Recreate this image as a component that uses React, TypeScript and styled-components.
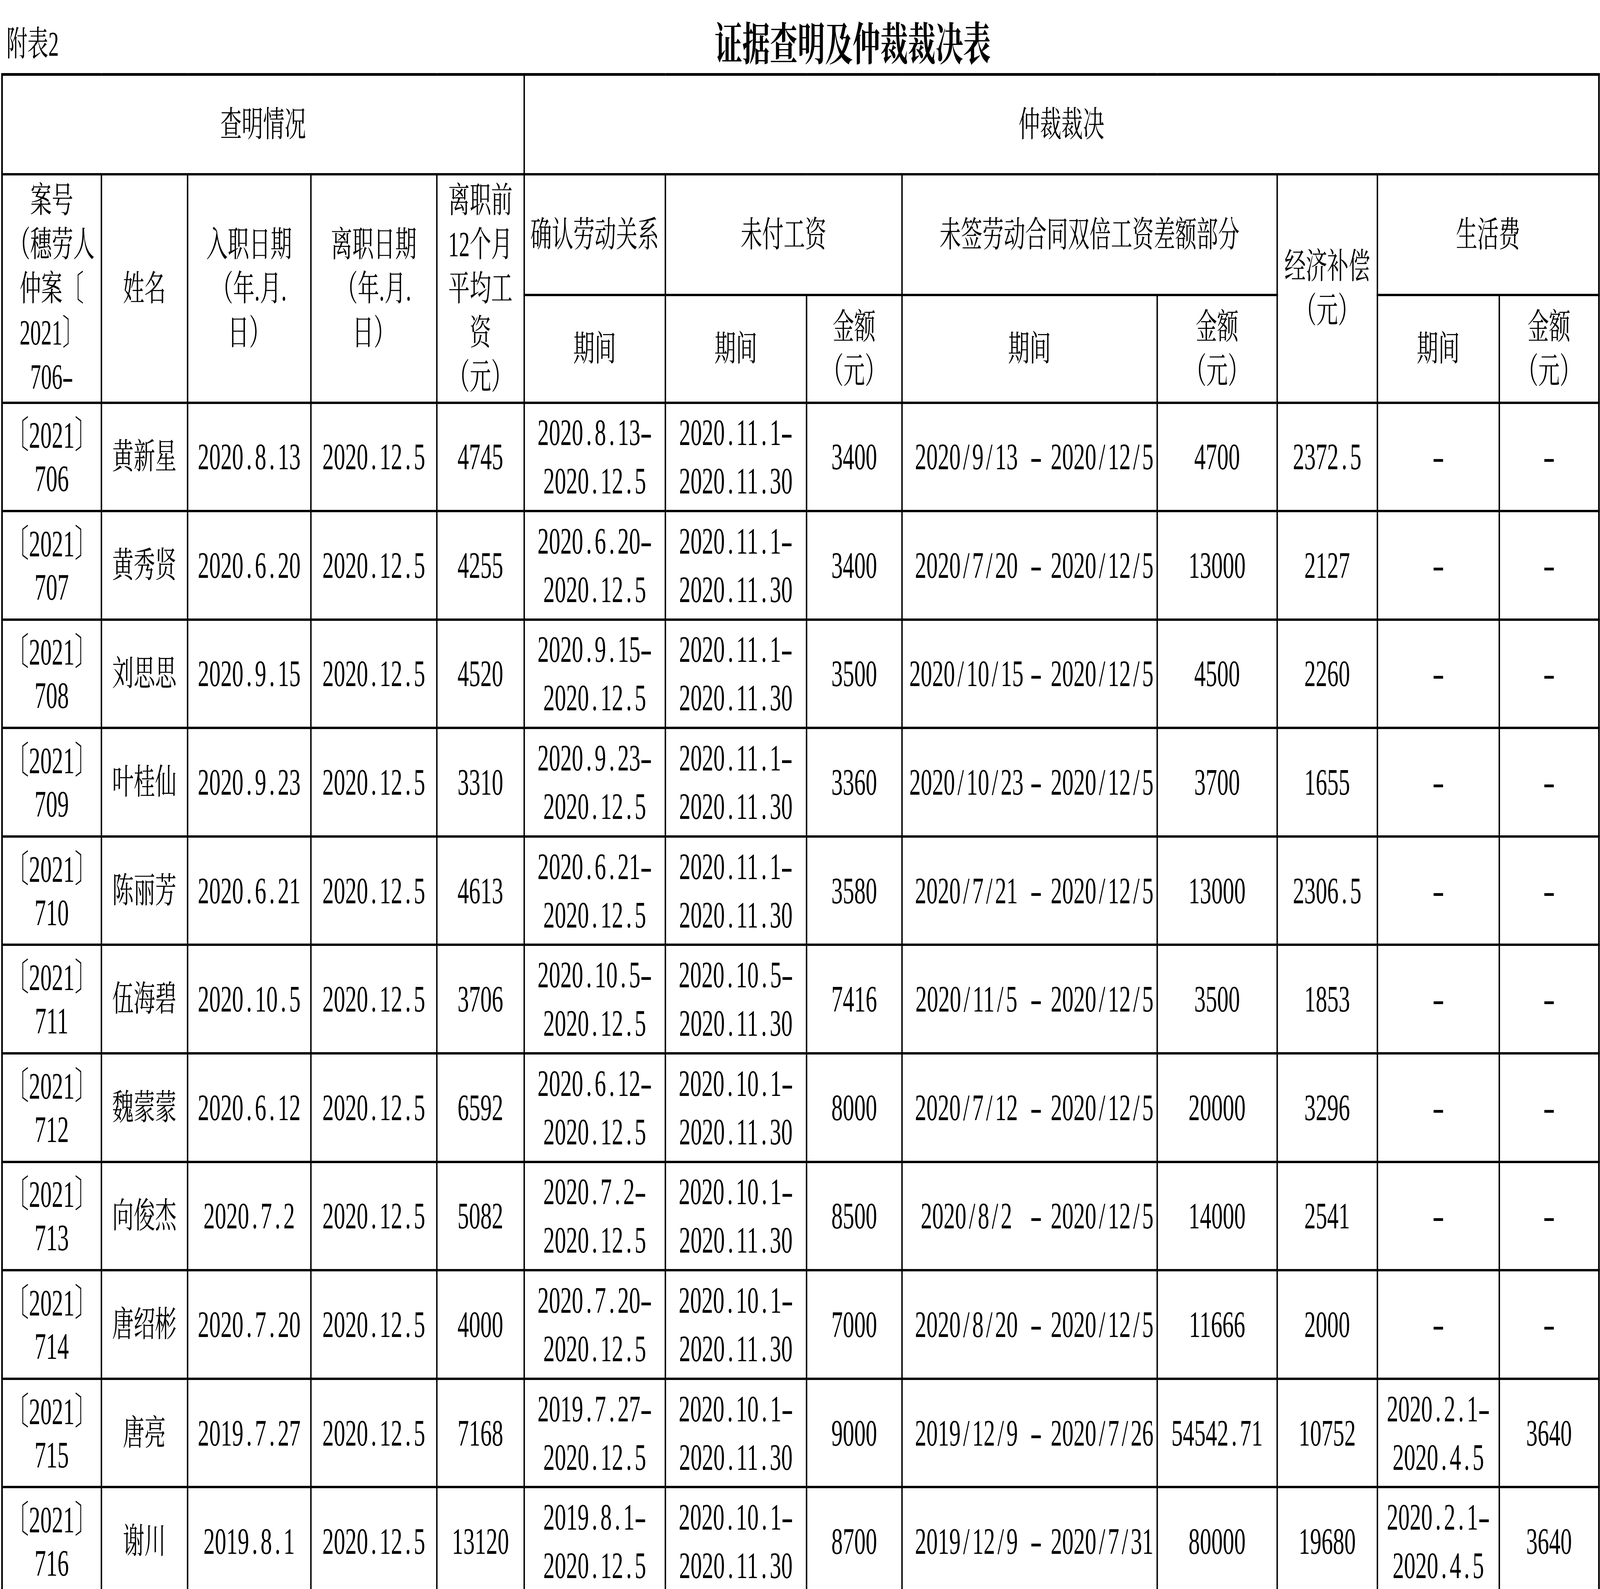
import React, { useEffect, useState } from 'react';
import styled, { createGlobalStyle } from 'styled-components';

const SERIF = `"Liberation Serif", "Noto Serif CJK SC", "Noto Sans CJK SC", serif`;
const FRAME_W = 6721;
const FRAME_H = 4067;

const GlobalStyle = createGlobalStyle`
  html, body {
    margin: 0;
    padding: 0;
    overflow: hidden;
    background: #fff;
  }
  body {
    color: #000;
    font-family: ${SERIF};
  }
`;

interface CaseRow {
  no: string;
  name: string;
  start: string;
  end: string;
  avg: string;
  relation: [string, string];
  unpaid: [string, string];
  unpaidAmount: string;
  doubleFrom: string;
  doubleTo: string;
  doubleAmount: string;
  compensation: string;
  living?: [string, string];
  livingAmount?: string;
}

const rows: CaseRow[] = [
  { no: '706', name: '黄新星', start: '2020.8.13', end: '2020.12.5', avg: '4745', relation: ['2020.8.13-', '2020.12.5'], unpaid: ['2020.11.1-', '2020.11.30'], unpaidAmount: '3400', doubleFrom: '2020/9/13', doubleTo: '2020/12/5', doubleAmount: '4700', compensation: '2372.5' },
  { no: '707', name: '黄秀贤', start: '2020.6.20', end: '2020.12.5', avg: '4255', relation: ['2020.6.20-', '2020.12.5'], unpaid: ['2020.11.1-', '2020.11.30'], unpaidAmount: '3400', doubleFrom: '2020/7/20', doubleTo: '2020/12/5', doubleAmount: '13000', compensation: '2127' },
  { no: '708', name: '刘思思', start: '2020.9.15', end: '2020.12.5', avg: '4520', relation: ['2020.9.15-', '2020.12.5'], unpaid: ['2020.11.1-', '2020.11.30'], unpaidAmount: '3500', doubleFrom: '2020/10/15', doubleTo: '2020/12/5', doubleAmount: '4500', compensation: '2260' },
  { no: '709', name: '叶桂仙', start: '2020.9.23', end: '2020.12.5', avg: '3310', relation: ['2020.9.23-', '2020.12.5'], unpaid: ['2020.11.1-', '2020.11.30'], unpaidAmount: '3360', doubleFrom: '2020/10/23', doubleTo: '2020/12/5', doubleAmount: '3700', compensation: '1655' },
  { no: '710', name: '陈丽芳', start: '2020.6.21', end: '2020.12.5', avg: '4613', relation: ['2020.6.21-', '2020.12.5'], unpaid: ['2020.11.1-', '2020.11.30'], unpaidAmount: '3580', doubleFrom: '2020/7/21', doubleTo: '2020/12/5', doubleAmount: '13000', compensation: '2306.5' },
  { no: '711', name: '伍海碧', start: '2020.10.5', end: '2020.12.5', avg: '3706', relation: ['2020.10.5-', '2020.12.5'], unpaid: ['2020.10.5-', '2020.11.30'], unpaidAmount: '7416', doubleFrom: '2020/11/5', doubleTo: '2020/12/5', doubleAmount: '3500', compensation: '1853' },
  { no: '712', name: '魏蒙蒙', start: '2020.6.12', end: '2020.12.5', avg: '6592', relation: ['2020.6.12-', '2020.12.5'], unpaid: ['2020.10.1-', '2020.11.30'], unpaidAmount: '8000', doubleFrom: '2020/7/12', doubleTo: '2020/12/5', doubleAmount: '20000', compensation: '3296' },
  { no: '713', name: '向俊杰', start: '2020.7.2', end: '2020.12.5', avg: '5082', relation: ['2020.7.2-', '2020.12.5'], unpaid: ['2020.10.1-', '2020.11.30'], unpaidAmount: '8500', doubleFrom: '2020/8/2', doubleTo: '2020/12/5', doubleAmount: '14000', compensation: '2541' },
  { no: '714', name: '唐绍彬', start: '2020.7.20', end: '2020.12.5', avg: '4000', relation: ['2020.7.20-', '2020.12.5'], unpaid: ['2020.10.1-', '2020.11.30'], unpaidAmount: '7000', doubleFrom: '2020/8/20', doubleTo: '2020/12/5', doubleAmount: '11666', compensation: '2000' },
  { no: '715', name: '唐亮', start: '2019.7.27', end: '2020.12.5', avg: '7168', relation: ['2019.7.27-', '2020.12.5'], unpaid: ['2020.10.1-', '2020.11.30'], unpaidAmount: '9000', doubleFrom: '2019/12/9', doubleTo: '2020/7/26', doubleAmount: '54542.71', compensation: '10752', living: ['2020.2.1-', '2020.4.5'], livingAmount: '3640' },
  { no: '716', name: '谢川', start: '2019.8.1', end: '2020.12.5', avg: '13120', relation: ['2019.8.1-', '2020.12.5'], unpaid: ['2020.10.1-', '2020.11.30'], unpaidAmount: '8700', doubleFrom: '2019/12/9', doubleTo: '2020/7/31', doubleAmount: '80000', compensation: '19680', living: ['2020.2.1-', '2020.4.5'], livingAmount: '3640' },
];

const columnWidths = [417, 362, 518, 529, 367, 593, 593, 401, 1072, 504, 421, 512, 419];

// the sheet is drawn at the reference's pixel size and fitted to whatever window we get
const useFit = () => {
  const measure = () => {
    const sx = window.innerWidth / FRAME_W;
    const sy = window.innerHeight > 0 ? window.innerHeight / FRAME_H : sx;
    return { sx, sy };
  };
  const [fit, setFit] = useState(measure);
  useEffect(() => {
    const onResize = () => setFit(measure());
    window.addEventListener('resize', onResize);
    return () => window.removeEventListener('resize', onResize);
  }, []);
  return fit;
};

const Viewport = styled.div`
  width: 100vw;
  height: 100vh;
  overflow: hidden;
`;

const Page = styled.div`
  width: ${FRAME_W}px;
  height: ${FRAME_H}px;
  transform-origin: 0 0;
  display: flex;
  flex-direction: column;
`;

const TitleBar = styled.div`
  height: 187px;
  box-sizing: border-box;
  padding: 20px 0 0 27px;
  display: flex;
  align-items: center;
  flex-shrink: 0;
`;

const Label = styled.div`
  width: 225px;
  font-size: 88px;
  white-space: nowrap;
`;

const Title = styled.h1`
  margin: 0 0 0 2750px;
  font-size: 116px;
  font-weight: 700;
  white-space: nowrap;
`;

const Sheet = styled.table`
  margin-left: 5px;
  width: 6712px;
  table-layout: fixed;
  border-collapse: collapse;
  border: 7px solid #000;
`;

const Row = styled.tr<{ $h: number }>`
  height: ${p => p.$h}px;
`;

const HeadCell = styled.th`
  border: 6px solid #000;
  padding: 0;
  font-weight: 400;
  font-size: 90px;
  line-height: 113px;
  text-align: center;
  vertical-align: middle;
  white-space: nowrap;
`;

const Cell = styled.td<{ $size?: number; $lh?: number }>`
  border: 6px solid #000;
  padding: 0;
  font-size: ${p => p.$size ?? 96}px;
  line-height: ${p => p.$lh ?? 120}px;
  text-align: center;
  vertical-align: middle;
  white-space: nowrap;
`;

const Glyph = styled.span<{ $wide?: boolean }>`
  display: inline-block;
  width: 0.5em;
  text-align: center;
  transform: ${p => (p.$wide ? 'scaleX(1.6)' : 'none')};
`;

const Split = styled.div`
  display: grid;
  grid-template-columns: 536px 1fr;
  align-items: center;
`;

const From = styled.span`
  text-align: center;
`;

const To = styled.span`
  display: flex;
  justify-content: flex-end;
  align-items: center;
  gap: 38px;
  padding-right: 30px;
`;

const Num = ({ text }: { text: string }) => (
  <>
    {text.split(/([./-])/).map((part, i) => {
      if (part === '-') return <Glyph key={i} $wide>-</Glyph>;
      if (part === '.' || part === '/') return <Glyph key={i}>{part}</Glyph>;
      return part;
    })}
  </>
);

const Lines = ({ lines }: { lines: string[] }) => (
  <>
    {lines.map((line, i) => (
      <React.Fragment key={i}>
        {i > 0 && <br />}
        {line}
      </React.Fragment>
    ))}
  </>
);

const NumLines = ({ lines }: { lines: string[] }) => (
  <>
    {lines.map((line, i) => (
      <React.Fragment key={i}>
        {i > 0 && <br />}
        <Num text={line} />
      </React.Fragment>
    ))}
  </>
);

const App = () => {
  const { sx, sy } = useFit();

  return (
    <Viewport>
      <GlobalStyle />
      <Page style={{ transform: `scale(${sx}, ${sy})` }}>
        <TitleBar>
          <Label>附表2</Label>
          <Title>证据查明及仲裁裁决表</Title>
        </TitleBar>
        <Sheet>
          <colgroup>
            {columnWidths.map((w, i) => (
              <col key={i} style={{ width: w }} />
            ))}
          </colgroup>
          <thead>
            <Row $h={255}>
              <HeadCell colSpan={5}>查明情况</HeadCell>
              <HeadCell colSpan={8}>仲裁裁决</HeadCell>
            </Row>
            <Row $h={309}>
              <HeadCell rowSpan={2}>
                案号<br />（穗劳人<br />仲案〔<br />2021〕<br />706<Glyph $wide>-</Glyph>
              </HeadCell>
              <HeadCell rowSpan={2}>姓名</HeadCell>
              <HeadCell rowSpan={2}><Lines lines={['入职日期', '（年.月.', '日）']} /></HeadCell>
              <HeadCell rowSpan={2}><Lines lines={['离职日期', '（年.月.', '日）']} /></HeadCell>
              <HeadCell rowSpan={2}><Lines lines={['离职前', '12个月', '平均工', '资', '（元）']} /></HeadCell>
              <HeadCell>确认劳动关系</HeadCell>
              <HeadCell colSpan={2}>未付工资</HeadCell>
              <HeadCell colSpan={2}>未签劳动合同双倍工资差额部分</HeadCell>
              <HeadCell rowSpan={2}><Lines lines={['经济补偿', '（元）']} /></HeadCell>
              <HeadCell colSpan={2}>生活费</HeadCell>
            </Row>
            <Row $h={276}>
              <HeadCell>期间</HeadCell>
              <HeadCell>期间</HeadCell>
              <HeadCell><Lines lines={['金额', '（元）']} /></HeadCell>
              <HeadCell>期间</HeadCell>
              <HeadCell><Lines lines={['金额', '（元）']} /></HeadCell>
              <HeadCell>期间</HeadCell>
              <HeadCell><Lines lines={['金额', '（元）']} /></HeadCell>
            </Row>
          </thead>
          <tbody>
            {rows.map(r => (
              <Row key={r.no} $h={277.6}>
                <Cell $lh={111}>〔2021〕<br />{r.no}</Cell>
                <Cell $size={90}>{r.name}</Cell>
                <Cell><Num text={r.start} /></Cell>
                <Cell><Num text={r.end} /></Cell>
                <Cell><Num text={r.avg} /></Cell>
                <Cell $lh={124}><NumLines lines={r.relation} /></Cell>
                <Cell $lh={124}><NumLines lines={r.unpaid} /></Cell>
                <Cell><Num text={r.unpaidAmount} /></Cell>
                <Cell>
                  <Split>
                    <From><Num text={r.doubleFrom} /></From>
                    <To>
                      <Glyph $wide>-</Glyph>
                      <span><Num text={r.doubleTo} /></span>
                    </To>
                  </Split>
                </Cell>
                <Cell><Num text={r.doubleAmount} /></Cell>
                <Cell><Num text={r.compensation} /></Cell>
                <Cell $lh={124}>{r.living ? <NumLines lines={r.living} /> : <Glyph $wide>-</Glyph>}</Cell>
                <Cell>{r.livingAmount ? <Num text={r.livingAmount} /> : <Glyph $wide>-</Glyph>}</Cell>
              </Row>
            ))}
          </tbody>
        </Sheet>
      </Page>
    </Viewport>
  );
};

export default App;
